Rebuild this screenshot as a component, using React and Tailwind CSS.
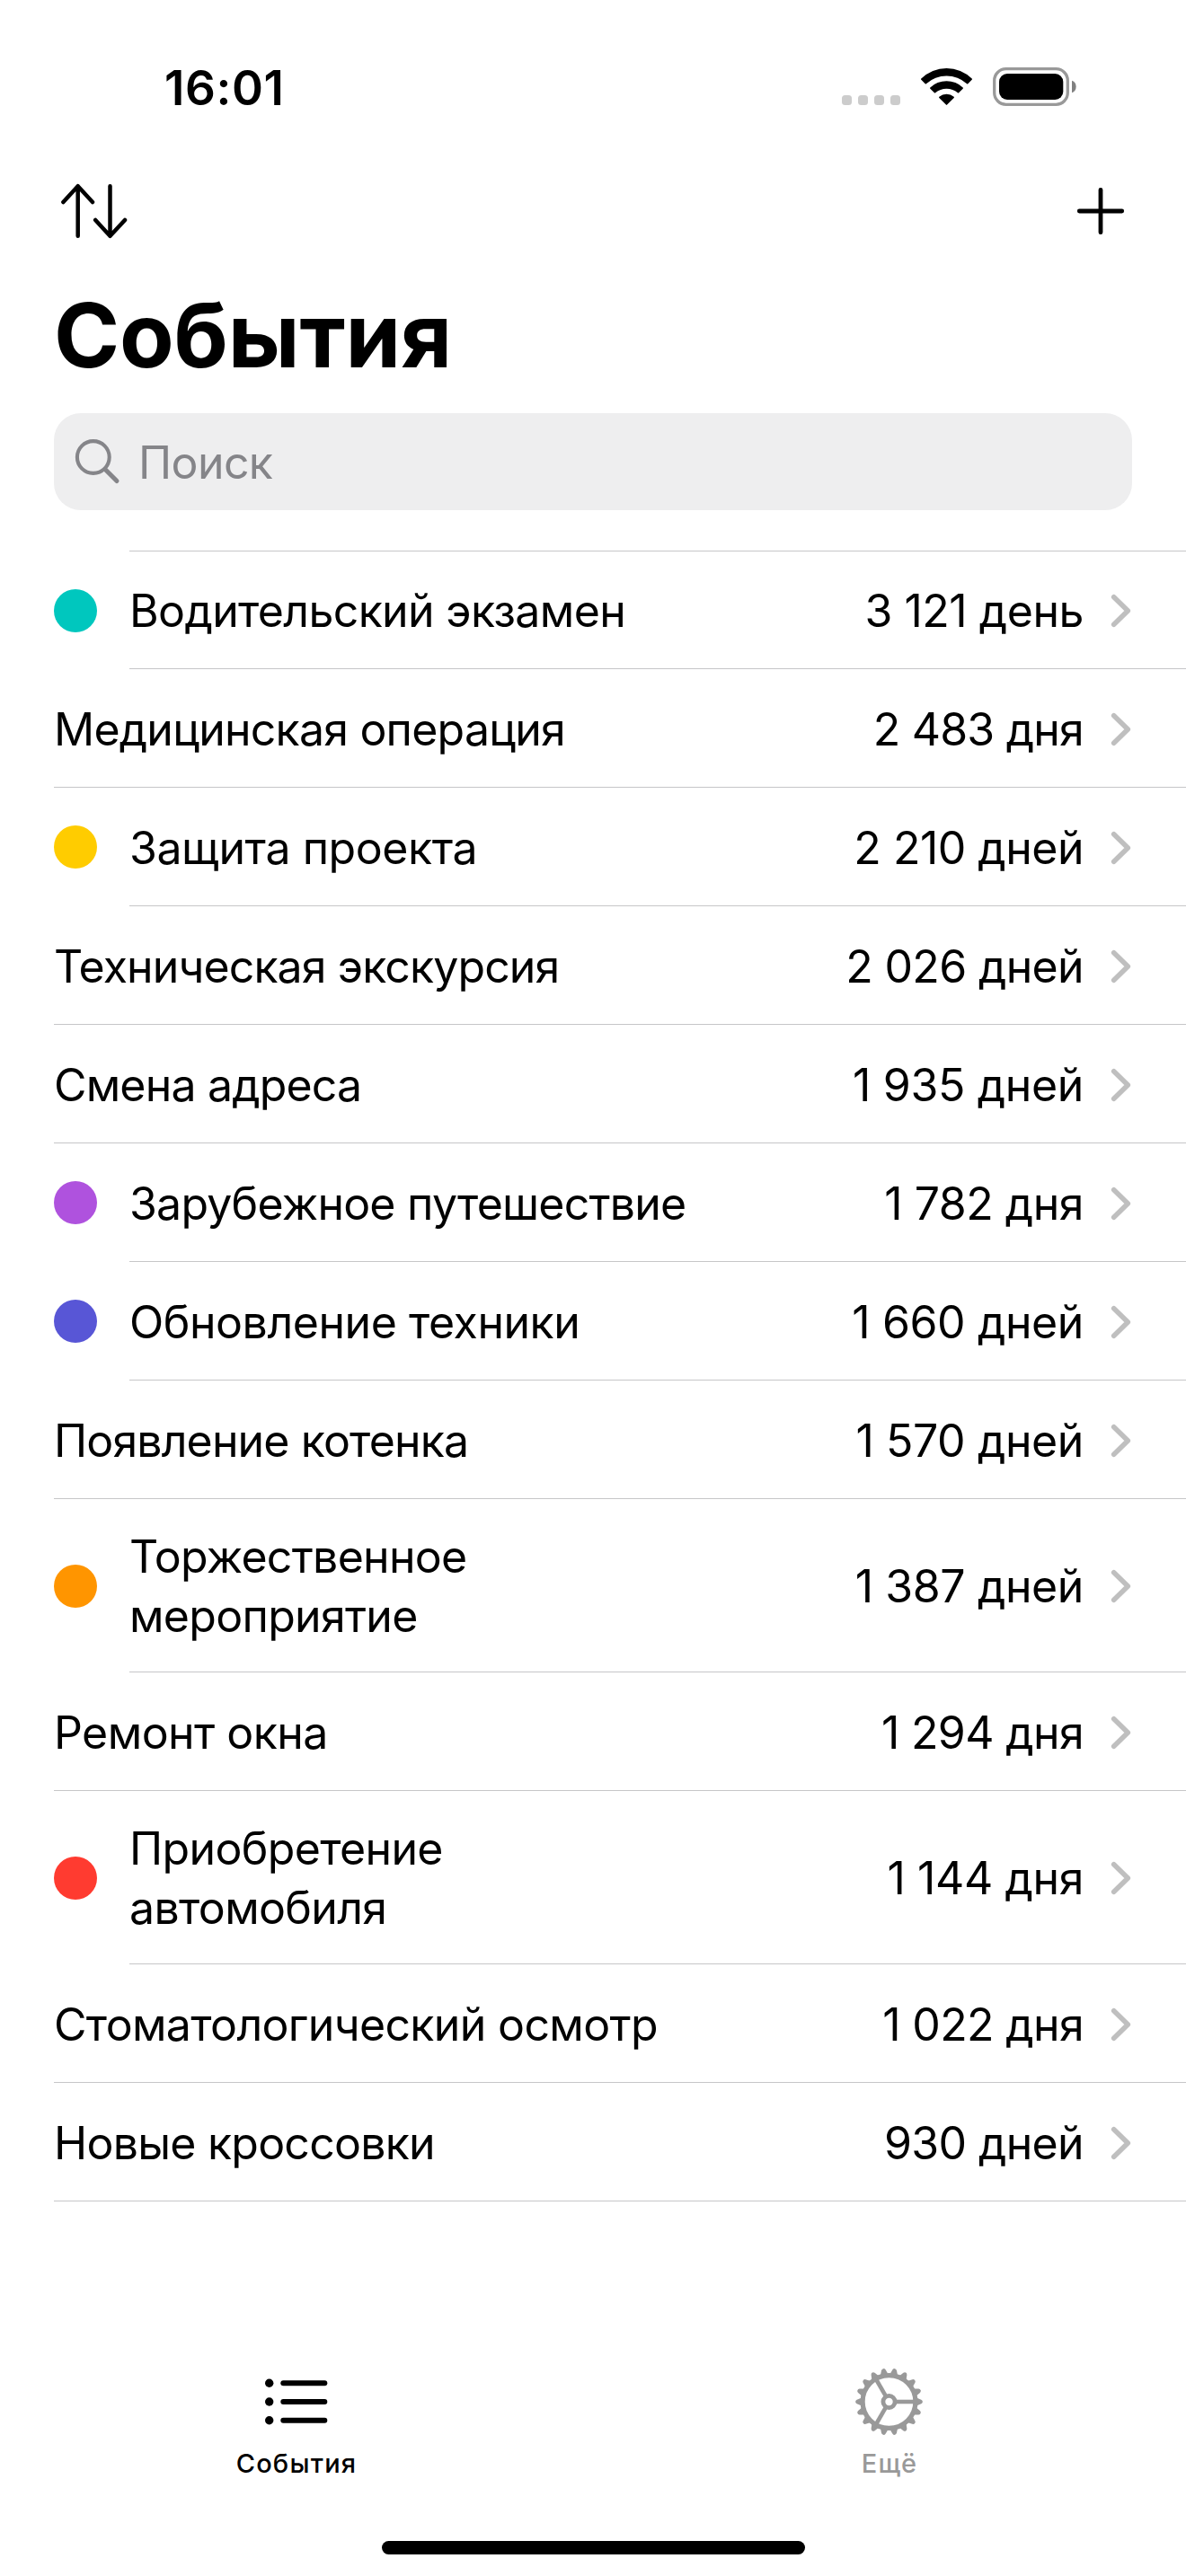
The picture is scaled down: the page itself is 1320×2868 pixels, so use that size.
const EVENTS = [
  { title: "Водительский экзамен", days: "3\u00a0121\u00a0день", dot: "bg-[#00c7be]", daysTracking: "tracking-[-0.46px]" },
  { title: "Медицинская операция", days: "2\u00a0483\u00a0дня", titleTracking: "tracking-[-0.78px]", daysTracking: "tracking-[-0.8px]" },
  { title: "Защита проекта", days: "2\u00a0210\u00a0дней", dot: "bg-[#ffcc00]", titleTracking: "tracking-[-0.45px]", daysTracking: "tracking-[-0.5px]" },
  { title: "Техническая экскурсия", days: "2\u00a0026\u00a0дней", titleTracking: "tracking-[-0.88px]" },
  { title: "Смена адреса", days: "1\u00a0935\u00a0дней", titleTracking: "tracking-[-0.83px]", daysTracking: "tracking-[-0.35px]" },
  { title: "Зарубежное путешествие", days: "1\u00a0782\u00a0дня", dot: "bg-[#af52de]", titleTracking: "tracking-[-0.78px]", daysTracking: "tracking-[-0.5px]" },
  { title: "Обновление техники", days: "1\u00a0660\u00a0дней", dot: "bg-[#5856d6]", titleTracking: "tracking-[-0.45px]", daysTracking: "tracking-[-0.4px]" },
  { title: "Появление котенка", days: "1\u00a0570\u00a0дней", titleTracking: "tracking-[-0.85px]", daysTracking: "tracking-[-0.4px]" },
  { title: "Торжественное\nмероприятие", days: "1\u00a0387\u00a0дней", dot: "bg-[#ff9500]", titleTracking: "tracking-[-0.7px]", daysTracking: "tracking-[-0.4px]" },
  { title: "Ремонт окна", days: "1\u00a0294\u00a0дня", titleTracking: "tracking-[-0.55px]" },
  { title: "Приобретение\nавтомобиля", days: "1\u00a0144\u00a0дня", dot: "bg-[#ff3b30]", daysTracking: "tracking-[-0.4px]" },
  { title: "Стоматологический осмотр", days: "1\u00a0022\u00a0дня" },
  { title: "Новые кроссовки", days: "930\u00a0дней", titleTracking: "tracking-[-0.75px]" },
];

const TEETH = Array.from({ length: 18 }, (_, i) => i * 20);

function StatusBar() {
  return (
    <div className="flex h-[192px] items-center pl-[183px] pr-[122px]">
      <span className="pt-1 text-[53px] font-semibold leading-[60px] tracking-[0.6px]">16:01</span>
      <div className="ml-auto flex items-center">
        <div className="mt-[31px] flex gap-[7px]">
          {[0, 1, 2, 3].map((i) => (
            <span key={i} className="size-[11px] rounded-[3.5px] bg-[#cccccc]" />
          ))}
        </div>
        <svg className="ml-[22px]" width="58" height="43" viewBox="-0.5 0 58 43">
          <path d="M0.8 12.6 A40 40 0 0 1 57.2 12.6 Q57.8 13.2 57.2 13.8 L52.8 18.2 Q52.2 18.7 51.6 18.2 A34 34 0 0 0 6.4 18.2 Q5.8 18.7 5.2 18.2 L0.8 13.8 Q0.2 13.2 0.8 12.6 Z" />
          <path d="M10.8 22.6 A26 26 0 0 1 47.2 22.6 Q47.8 23.2 47.2 23.8 L42.6 28.3 Q42 28.8 41.4 28.3 A19 19 0 0 0 16.6 28.3 Q16 28.8 15.4 28.3 L10.8 23.8 Q10.2 23.2 10.8 22.6 Z" />
          <path d="M20.8 32.8 A12.5 12.5 0 0 1 37.2 32.8 Q37.8 33.4 37.2 34 L29.6 41.6 Q29 42.2 28.4 41.6 L20.8 34 Q20.2 33.4 20.8 32.8 Z" />
        </svg>
        <svg className="ml-[23px]" width="93" height="43" viewBox="0 0 93 43">
          <rect x="1.7" y="1.7" width="81.6" height="39.6" rx="13" fill="none" stroke="#999999" strokeWidth="3.3" />
          <rect x="7" y="7" width="71.3" height="29" rx="9" />
          <path d="M88 14.7 A7.3 7.3 0 0 1 88 28.3 Z" fill="#808080" />
        </svg>
      </div>
    </div>
  );
}

function SortIcon() {
  return (
    <svg width="74" height="64" viewBox="0 0 74 64" fill="none" stroke="#000" strokeWidth="4.5" strokeLinecap="round" strokeLinejoin="round">
      <path d="M18.7 59.8V4.2M2.4 22L18.7 4.2L35 22" />
      <path d="M54.5 4.2V59.8M38.2 42L54.5 59.8L71 42" />
    </svg>
  );
}

function PlusIcon() {
  return (
    <svg width="54" height="54" viewBox="0 0 54 54" stroke="#000" strokeWidth="4.8" strokeLinecap="round">
      <path d="M3.3 27H50.7M27 3.3V50.7" />
    </svg>
  );
}

function SearchIcon() {
  return (
    <svg width="52" height="52" viewBox="0 0 52 52" fill="none" stroke="#858589" strokeLinecap="round">
      <circle cx="21.8" cy="21" r="17.9" strokeWidth="4.1" />
      <path d="M35 34.4L48 47.5" strokeWidth="5" />
    </svg>
  );
}

function Chevron() {
  return (
    <svg className="ml-[30px] shrink-0" width="24" height="38" viewBox="0 0 24 38" fill="none" stroke="#bfbfbf" strokeWidth="5.6" strokeLinecap="round" strokeLinejoin="round">
      <path d="M3.7 3.8L19.3 19L3.7 34.2" />
    </svg>
  );
}

function ListIcon() {
  return (
    <svg width="72" height="52" viewBox="0 0 72 52">
      {[5.3, 26, 46.7].map((y) => (
        <g key={y}>
          <circle cx="5.7" cy={y} r="4.7" />
          <rect x="18.3" y={y - 3} width="52" height="6" rx="3" />
        </g>
      ))}
    </svg>
  );
}

function GearIcon() {
  return (
    <svg width="76" height="76" viewBox="-37.5 -38 76 76" fill="none" stroke="#999999">
      <circle r="29.4" strokeWidth="5.2" />
      <circle r="6.6" strokeWidth="4.8" />
      {[0, 120, 240].map((a) => (
        <path key={a} d="M8 0H28" strokeWidth="4.6" transform={`rotate(${a})`} />
      ))}
      {TEETH.map((a) => (
        <path key={a} d="M31 -4.2L35.8 -2.3Q37.4 -1.6 37.4 0Q37.4 1.6 35.8 2.3L31 4.2Z" fill="#999999" stroke="none" transform={`rotate(${a})`} />
      ))}
    </svg>
  );
}

function EventRow({ title, days, dot, height, titleTracking = "", daysTracking = "" }) {
  return (
    <li className={`flex pl-[60px] ${height}`}>
      {dot && <span className={`mr-9 size-12 shrink-0 self-center rounded-full ${dot}`} />}
      <div className="flex flex-1 items-center border-b border-[#c6c6c8] pr-[60px] pt-[2px]">
        <span className={`whitespace-pre-line ${titleTracking}`}>{title}</span>
        <span className={`ml-auto whitespace-nowrap ${daysTracking}`}>{days}</span>
        <Chevron />
      </div>
    </li>
  );
}

export default function App() {
  return (
    <main className="flex h-[2868px] w-[1320px] flex-col overflow-hidden bg-white font-['Inter',sans-serif] text-black">
      <StatusBar />
      <nav className="flex h-[86px] items-center justify-between pl-[68px] pr-[68px]">
        <SortIcon />
        <PlusIcon />
      </nav>
      <h1 className="ml-[60px] mt-9 text-[99px] font-bold leading-[118px] tracking-[-0.2px]">События</h1>
      <div className="mx-[60px] mt-7 flex h-[108px] items-center rounded-[30px] bg-[#eeeeef] pl-[22px] text-[50px] leading-[66px] tracking-[-0.6px] text-[#858589]">
        <SearchIcon />
        <span className="ml-[20px] pt-[2px]">Поиск</span>
      </div>
      <ul className="mt-[45px] text-[50px] leading-[66px] tracking-[-0.65px]">
        <li className="ml-36 h-px bg-[#c6c6c8]" />
        {EVENTS.map((e, i) => (
          <EventRow
            key={e.title}
            {...e}
            height={i === 0 ? "h-[131px]" : e.title.includes("\n") ? "h-[193px]" : "h-[132px]"}
          />
        ))}
      </ul>
      <footer className="mt-auto flex h-[232px] flex-col items-center">
        <div className="flex w-full text-[29px] font-medium leading-[36px] tracking-[1.2px]">
          <div className="flex w-1/2 flex-col items-center">
            <div className="flex h-[76px] items-center">
              <ListIcon />
            </div>
            <span className="mt-[13px]">События</span>
          </div>
          <div className="flex w-1/2 flex-col items-center text-[#999999]">
            <GearIcon />
            <span className="mt-[13px]">Ещё</span>
          </div>
        </div>
        <div className="mb-6 ml-px mt-auto h-[15px] w-[471px] rounded-full bg-black" />
      </footer>
    </main>
  );
}
